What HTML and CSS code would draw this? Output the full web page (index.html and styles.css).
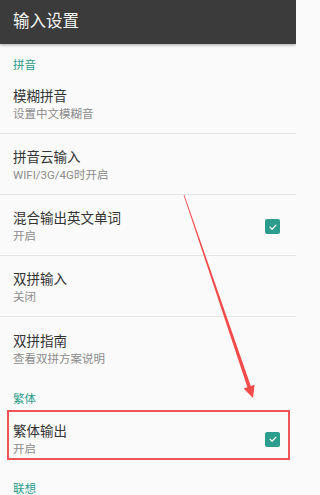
FILE: index.html
```html
<!DOCTYPE html>
<html lang="zh-CN">
<head>
<meta charset="utf-8">
<link rel="stylesheet" href="styles.css">
</head>
<body>
<div class="screen">
  <header class="appbar"><span class="appbar-title">输入设置</span></header>
  <main class="list">
    <div class="category">拼音</div>
    <div class="pref"><div class="pref-text"><div class="pref-title">模糊拼音</div><div class="pref-sub">设置中文模糊音</div></div></div>
    <div class="pref"><div class="pref-text"><div class="pref-title">拼音云输入</div><div class="pref-sub">WIFI/3G/4G时开启</div></div></div>
    <div class="pref"><div class="pref-text"><div class="pref-title">混合输出英文单词</div><div class="pref-sub">开启</div></div><span class="check"><svg viewBox="0 0 16 16" width="16" height="16"><path d="M4 8.2 L6.8 11 L12 5.6" fill="none" stroke="#fff" stroke-width="1.6" stroke-linecap="round" stroke-linejoin="round"/></svg></span></div>
    <div class="pref"><div class="pref-text"><div class="pref-title">双拼输入</div><div class="pref-sub">关闭</div></div></div>
    <div class="pref last"><div class="pref-text"><div class="pref-title">双拼指南</div><div class="pref-sub">查看双拼方案说明</div></div></div>
    <div class="category">繁体</div>
    <div class="pref last highlighted"><div class="pref-text"><div class="pref-title">繁体输出</div><div class="pref-sub">开启</div></div><span class="check"><svg viewBox="0 0 16 16" width="16" height="16"><path d="M4 8.2 L6.8 11 L12 5.6" fill="none" stroke="#fff" stroke-width="1.6" stroke-linecap="round" stroke-linejoin="round"/></svg></span></div>
    <div class="category">联想</div>
  </main>
  <svg class="arrow" width="296" height="495" viewBox="0 0 296 495">
    <polygon points="184.4,194.9 250.8,386.0 254.6,384.7 253,398 243.6,388.5 247.4,387.2 183.6,195.1" fill="#f24b4b"/>
  </svg>
</div>
</body>
</html>
```
FILE: styles.css
```css
html, body {
  margin: 0;
  padding: 0;
  background: #fafafa;
}
.screen {
  position: relative;
  width: 296px;
  height: 495px;
  overflow: hidden;
  background: #fafafa;
  font-family: Roboto, "Noto Sans CJK SC", sans-serif;
}
.appbar {
  height: 44px;
  background: #3b3b3b;
  display: flex;
  align-items: center;
  padding-left: 13px;
  box-shadow: 0 1px 3px rgba(0,0,0,0.35);
  position: relative;
  z-index: 1;
}
.appbar-title {
  color: #f2f2f2;
  font-size: 16.5px;
  line-height: 20px;
}
.list {
  display: flex;
  flex-direction: column;
}
.category {
  height: 29px;
  box-sizing: border-box;
  padding: 13px 13px 0;
  font-size: 11.5px;
  line-height: 16px;
  color: #2c9c8c;
}
.pref {
  position: relative;
  display: flex;
  align-items: center;
  box-sizing: border-box;
  height: 61px;
  padding: 0 16px 0 13px;
  border-bottom: 1px solid #e6e6e6;
}
.pref.last {
  border-bottom: none;
}
.pref-text {
  flex: 1;
  display: flex;
  flex-direction: column;
  padding-top: 3px;
}
.pref-title {
  font-size: 13.5px;
  line-height: 18px;
  color: #333333;
}
.pref-sub {
  font-size: 11.5px;
  line-height: 15px;
  color: #8c8c8c;
  margin-top: 2px;
}
.check {
  width: 15px;
  height: 15px;
  border-radius: 2px;
  background: #2c9c8c;
  display: flex;
  align-items: center;
  justify-content: center;
  margin-top: 3px;
}
.check svg {
  width: 12px;
  height: 12px;
}
.highlighted::after {
  content: "";
  position: absolute;
  left: 7px;
  right: 6px;
  top: 3px;
  bottom: 8px;
  border: 2px solid #f05555;
}
.arrow {
  position: absolute;
  left: 0;
  top: 0;
  pointer-events: none;
}
```
